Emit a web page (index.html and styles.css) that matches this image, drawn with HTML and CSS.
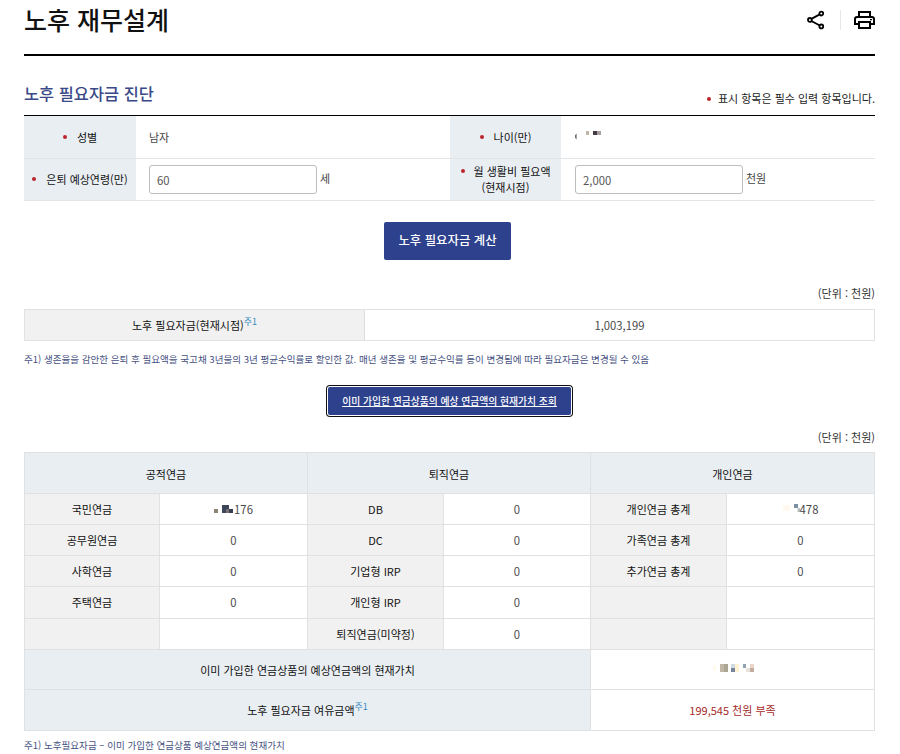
FILE: index.html
```html
<!DOCTYPE html>
<html lang="ko">
<head>
<meta charset="utf-8">
<title>노후 재무설계</title>
<link rel="stylesheet" href="styles.css">
</head>
<body>
<main class="page">
  <header class="page-head">
    <h1>노후 재무설계</h1>
    <div class="tools">
      <svg class="share" width="18" height="20" viewBox="0 0 18 20" fill="none" stroke="#000" stroke-width="1.8"><path d="M4.400 8.900 12.300 4.600M4.400 11 12.300 15.300"/><circle cx="2.900" cy="9.900" r="1.900"/><circle cx="14.300" cy="3.600" r="1.900"/><circle cx="14.300" cy="16.400" r="1.900"/></svg>
      <span class="sep"></span>
      <svg class="print" width="21" height="18" viewBox="0 0 21 18" fill="none" stroke="#000" stroke-width="2"><path d="M5 5V1h11v4M5 13H1V8.200Q1 6 3.200 6h14.600Q20 6 20 8.200V13h-4"/><path d="M5 11h11v6H5z"/><path d="M16 8.600h2" stroke-width="1.400"/></svg>
    </div>
  </header>

  <div class="section-head">
    <h2>노후 필요자금 진단</h2>
    <p><i class="dot"></i>표시 항목은 필수 입력 항목입니다.</p>
  </div>

  <div class="form">
    <div class="label"><i class="dot"></i>성별</div>
    <div class="value">남자</div>
    <div class="label"><i class="dot"></i>나이(만)</div>
    <div class="value"><svg class="mask-age" width="30" height="12" viewBox="0 0 30 12"><path d="M1.200 4.800v5.400" stroke="#777" stroke-width="1"/><path d="M.500 6v3" stroke="#555" stroke-width=".8"/><path fill="#bfb6a6" d="M11 2h3v4h-3z"/><path fill="#453a47" d="M18 2h4v4h-4z"/><path fill="#a89f9e" d="M22 2h4v4h-4z"/></svg></div>
    <div class="label"><i class="dot"></i>은퇴 예상연령(만)</div>
    <div class="value"><input type="text" value="60" aria-label="은퇴 예상연령"><span class="suffix">세</span></div>
    <div class="label two"><span><i class="dot"></i>월 생활비 필요액<br>(현재시점)</span></div>
    <div class="value"><input type="text" value="2,000" aria-label="월 생활비 필요액"><span class="suffix">천원</span></div>
  </div>

  <button class="calc" type="button">노후 필요자금 계산</button>

  <p class="unit">(단위 : 천원)</p>
  <div class="need">
    <div class="gray">노후 필요자금(현재시점)<sup>주1</sup></div>
    <div class="num">1,003,199</div>
  </div>
  <p class="note">주1) 생존율을 감안한 은퇴 후 필요액을 국고채 3년물의 3년 평균수익률로 할인한 값. 매년 생존율 및 평균수익률 등이 변경됨에 따라 필요자금은 변경될 수 있음</p>

  <a class="lookup">이미 가입한 연금상품의 예상 연금액의 현재가치 조회</a>

  <p class="unit second">(단위 : 천원)</p>
  <div class="pension">
    <div class="head">공적연금</div><div class="head">퇴직연금</div><div class="head">개인연금</div>

    <div class="gray">국민연금</div><div class="num"><svg class="mask-nps" width="20" height="10" viewBox="0 0 20 10"><path fill="#8d8571" d="M0 5h4v4H0z"/><path fill="#3c4658" d="M8 1h7v4H8zM8 5h4v4H8z"/><path fill="#7a7073" d="M12 5h3v4h-3z"/><path fill="#363d4d" d="M15 5h4v4h-4z"/></svg>176</div>
    <div class="gray">DB</div><div class="num">0</div>
    <div class="gray">개인연금 총계</div><div class="num"><svg class="mask-private" width="17" height="12" viewBox="0 0 17 12"><path fill="#fff9f0" d="M0 2h7v6H0z"/><path fill="#7c8fa5" d="M11 1h4v4h-4z"/><path fill="#b9c2cb" d="M14.500 5H17v4h-2.500z"/></svg>478</div>

    <div class="gray">공무원연금</div><div class="num">0</div>
    <div class="gray">DC</div><div class="num">0</div>
    <div class="gray">가족연금 총계</div><div class="num">0</div>

    <div class="gray">사학연금</div><div class="num">0</div>
    <div class="gray">기업형 IRP</div><div class="num">0</div>
    <div class="gray">추가연금 총계</div><div class="num">0</div>

    <div class="gray">주택연금</div><div class="num">0</div>
    <div class="gray">개인형 IRP</div><div class="num">0</div>
    <div class="gray"></div><div class="num"></div>

    <div class="gray"></div><div class="num"></div>
    <div class="gray">퇴직연금(미약정)</div><div class="num">0</div>
    <div class="gray"></div><div class="num"></div>

    <div class="total">이미 가입한 연금상품의 예상연금액의 현재가치</div>
    <div class="sum"><svg class="mask-sum" width="42" height="8" viewBox="0 0 42 8"><path fill="#fffaf0" d="M0 1h3v6H0z"/><path fill="#c2b7a6" d="M7 0h4v8H7z"/><path fill="#aaa594" d="M11 0h4v8h-4z"/><path fill="#d0dae2" d="M18 0h4v4h-4z"/><path fill="#74859a" d="M18 4h4v4h-4z"/><path fill="#fff3d3" d="M22 0h4v8h-4z"/><path fill="#8fa2ae" d="M30 0h3v4h-3z"/><path fill="#e7e2d9" d="M33 4h4v4h-4z"/><path fill="#ead5cb" d="M37 0h4v4h-4z"/><path fill="#c4aba0" d="M37 4h4v4h-4z"/></svg></div>
    <div class="total">노후 필요자금 여유금액<sup>주1</sup></div>
    <div class="sum short">199,545 천원 부족</div>
  </div>
  <p class="note last">주1) 노후필요자금 – 이미 가입한 연금상품 예상연금액의 현재가치</p>
</main>
</body>
</html>
```
FILE: styles.css
```css
* { box-sizing: border-box; }
html { overflow: hidden; }
body {
  margin: 0;
  background: #fff;
  color: #222;
  font: 400 11px/16px "Noto Sans CJK KR", sans-serif;
}
h1, h2, p { margin: 0; }
svg { display: block; flex: none; }
.page { width: 851px; height: 754px; margin-left: 24px; overflow: hidden; }

.page-head {
  display: flex;
  justify-content: space-between;
  align-items: flex-start;
  height: 56px;
  border-bottom: 2px solid #000;
}
h1 { font-size: 25px; line-height: 38px; font-weight: 500; color: #111; white-space: nowrap; }
.tools { display: flex; align-items: center; height: 22px; margin-top: 9px; }
.share { margin-right: 15px; }
.sep { width: 1px; height: 20px; background: #e7e7e7; margin-right: 13px; }

.section-head {
  display: flex;
  justify-content: space-between;
  align-items: flex-start;
  height: 59px;
  padding-top: 26px;
}
h2 { font-size: 16.400px; line-height: 22px; font-weight: 500; color: #3a4a88; }
.section-head p { padding-top: 8px; }
.dot {
  display: inline-block;
  width: 4px;
  height: 4px;
  margin-right: 7px;
  border-radius: 50%;
  background: #b9252b;
  vertical-align: 2px;
}

.form {
  display: grid;
  grid-template-columns: 112px 314px 111px 314px;
  grid-template-rows: 43px 42px;
  border-top: 1px solid #000;
}
.form > div { display: flex; align-items: center; border-bottom: 1px solid #e2e4e6; }
.label { justify-content: center; background: #e9eef3; text-align: center; color: #111; }
.form .label { padding-bottom: 1px; }
.label .dot { margin-right: 10px; }
.two .dot { margin-right: 9px; vertical-align: 3px; }
.form .value { padding-left: 13px; color: #444; }
.form .label + .value:nth-child(4n) { padding-left: 14px; }
.mask-age { margin-top: -4px; }
input {
  width: 168px;
  height: 29px;
  padding: 0 7px;
  border: 1px solid #bdbdbd;
  border-radius: 3px;
  background: #fff;
  font: 400 11.300px "Noto Sans CJK KR", sans-serif;
  color: #555;
}
.suffix { margin-left: 3px; margin-top: -3px; }

.calc {
  display: block;
  width: 127px;
  height: 38px;
  margin: 21px 0 0 360px;
  padding: 0 0 2px;
  border: 0;
  border-radius: 2px;
  background: #2d418d;
  color: #fff;
  font: 500 12.400px "Noto Sans CJK KR", sans-serif;
}
.unit { margin-top: 25px; text-align: right; color: #333; }
.need {
  display: grid;
  grid-template-columns: 340px 1fr;
  height: 32px;
  margin-top: 8px;
  border: 1px solid #e2e2e2;
}
.need > div, .pension > div { display: flex; align-items: center; justify-content: center; }
.gray { background: #f1f1f1; color: #111; }
.need .gray { border-right: 1px solid #ddd; }
.num { color: #4a4a4a; font-size: 11.300px; }
.pension .num, .pension .gray { padding-bottom: 1px; }
sup {
  font-size: 9px;
  line-height: 10px;
  color: #3289bd;
  margin-top: -6px;
}
.note { margin-top: 10px; font-size: 9.550px; line-height: 16px; color: #46517f; white-space: nowrap; }

.lookup {
  display: block;
  width: 243px;
  height: 28px;
  margin: 20px 0 0 304px;
  border-radius: 2px;
  background: #2d418d;
  box-shadow: 0 0 0 1px #fff, 0 0 0 2px #101010;
  color: #fff;
  font-size: 9.800px;
  line-height: 28px;
  font-weight: 500;
  text-align: center;
  text-decoration: underline;
}
.unit.second { margin-top: 14px; }

.pension {
  display: grid;
  grid-template-columns: 135px 148px 136px 147px 136px 148px;
  grid-template-rows: 41px 31px 31px 31px 32px 31px 40px 41px;
  margin-top: 7px;
  border: 1px solid #dfe1e3;
  border-right-width: 0;
  border-bottom-width: 0;
}
.pension > div { border-right: 1px solid #dfe1e3; border-bottom: 1px solid #dfe1e3; }
.pension .head { grid-column: span 2; background: #e9eef3; color: #111; padding-top: 2px; }
.pension .total { grid-column: span 4; background: #e9eef3; color: #111; }
.pension .sum { grid-column: span 2; }
.pension .short { color: #a52b2b; }
.mask-sum { margin-top: -3px; margin-left: 2px; }
.note.last { margin-top: 6px; }
```
